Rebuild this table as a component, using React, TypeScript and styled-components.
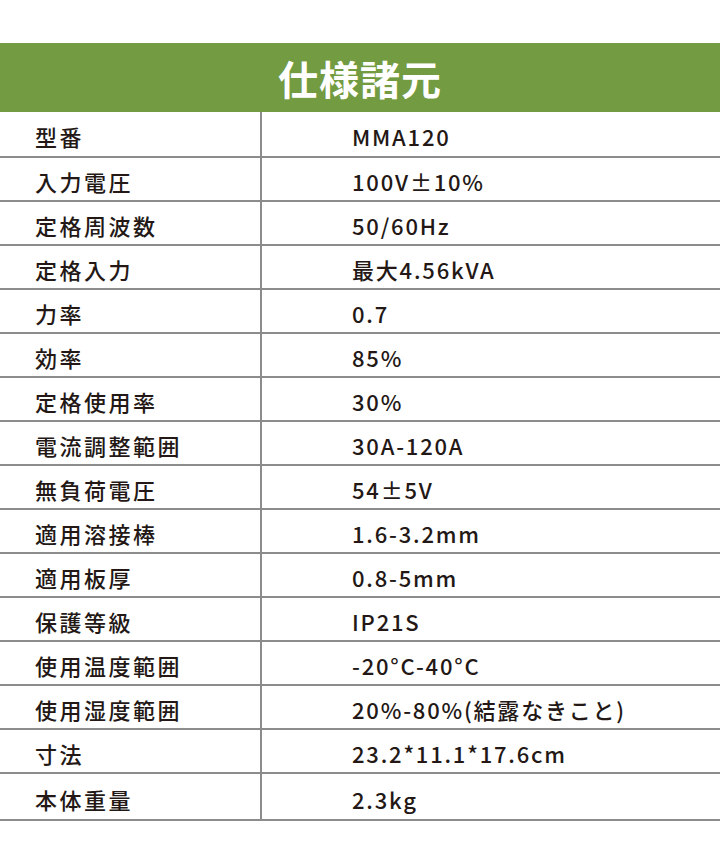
import React from "react";
import styled, { createGlobalStyle } from "styled-components";

const specs: [string, string][] = [
  ["型番", "MMA120"],
  ["入力電圧", "100V±10%"],
  ["定格周波数", "50/60Hz"],
  ["定格入力", "最大4.56kVA"],
  ["力率", "0.7"],
  ["効率", "85%"],
  ["定格使用率", "30%"],
  ["電流調整範囲", "30A-120A"],
  ["無負荷電圧", "54±5V"],
  ["適用溶接棒", "1.6-3.2mm"],
  ["適用板厚", "0.8-5mm"],
  ["保護等級", "IP21S"],
  ["使用温度範囲", "-20°C-40°C"],
  ["使用湿度範囲", "20%-80%(結露なきこと)"],
  ["寸法", "23.2*11.1*17.6cm"],
  ["本体重量", "2.3kg"],
];

export default function App(): JSX.Element {
  return (
    <>
      <GlobalStyle />
      <Page>
        <Header>仕様諸元</Header>
        <Table>
          {specs.map(([label, value]) => (
            <Row key={label}>
              <Label>{label}</Label>
              <Value>{value}</Value>
            </Row>
          ))}
        </Table>
      </Page>
    </>
  );
}

const GlobalStyle = createGlobalStyle`
  body {
    margin: 0;
    background: #ffffff;
    font-family: "Noto Sans CJK JP", "Noto Sans", sans-serif;
  }
`;

const Page = styled.div`
  width: 720px;
  height: 864px;
  padding-top: 43px;
  box-sizing: border-box;
  background: #ffffff;
`;

const Header = styled.h1`
  display: flex;
  align-items: center;
  justify-content: center;

  height: 69px;
  margin: 0;

  color: #ffffff;
  font-size: 40px;
  font-weight: 700;
  letter-spacing: 1px;

  background: #739b41;
`;

const Table = styled.div`
  display: flex;
  flex-direction: column;
`;

const Row = styled.div`
  display: grid;
  grid-template-columns: 262px 1fr;

  height: 44px;
  box-sizing: border-box;
  border-bottom: 2px solid #8c8c8c;

  &:first-child {
    height: 46px;
  }

  &:last-child {
    height: 47px;
  }
`;

const Label = styled.div`
  display: flex;
  align-items: center;

  padding: 4px 0 0 35px;
  border-right: 2px solid #8c8c8c;

  color: #231815;
  font-size: 22px;
  font-weight: 500;
  letter-spacing: 2.5px;
`;

const Value = styled.div`
  display: flex;
  align-items: center;

  padding: 4px 0 0 90px;

  color: #231815;
  font-size: 22px;
  font-weight: 500;
  letter-spacing: 1.8px;
`;
